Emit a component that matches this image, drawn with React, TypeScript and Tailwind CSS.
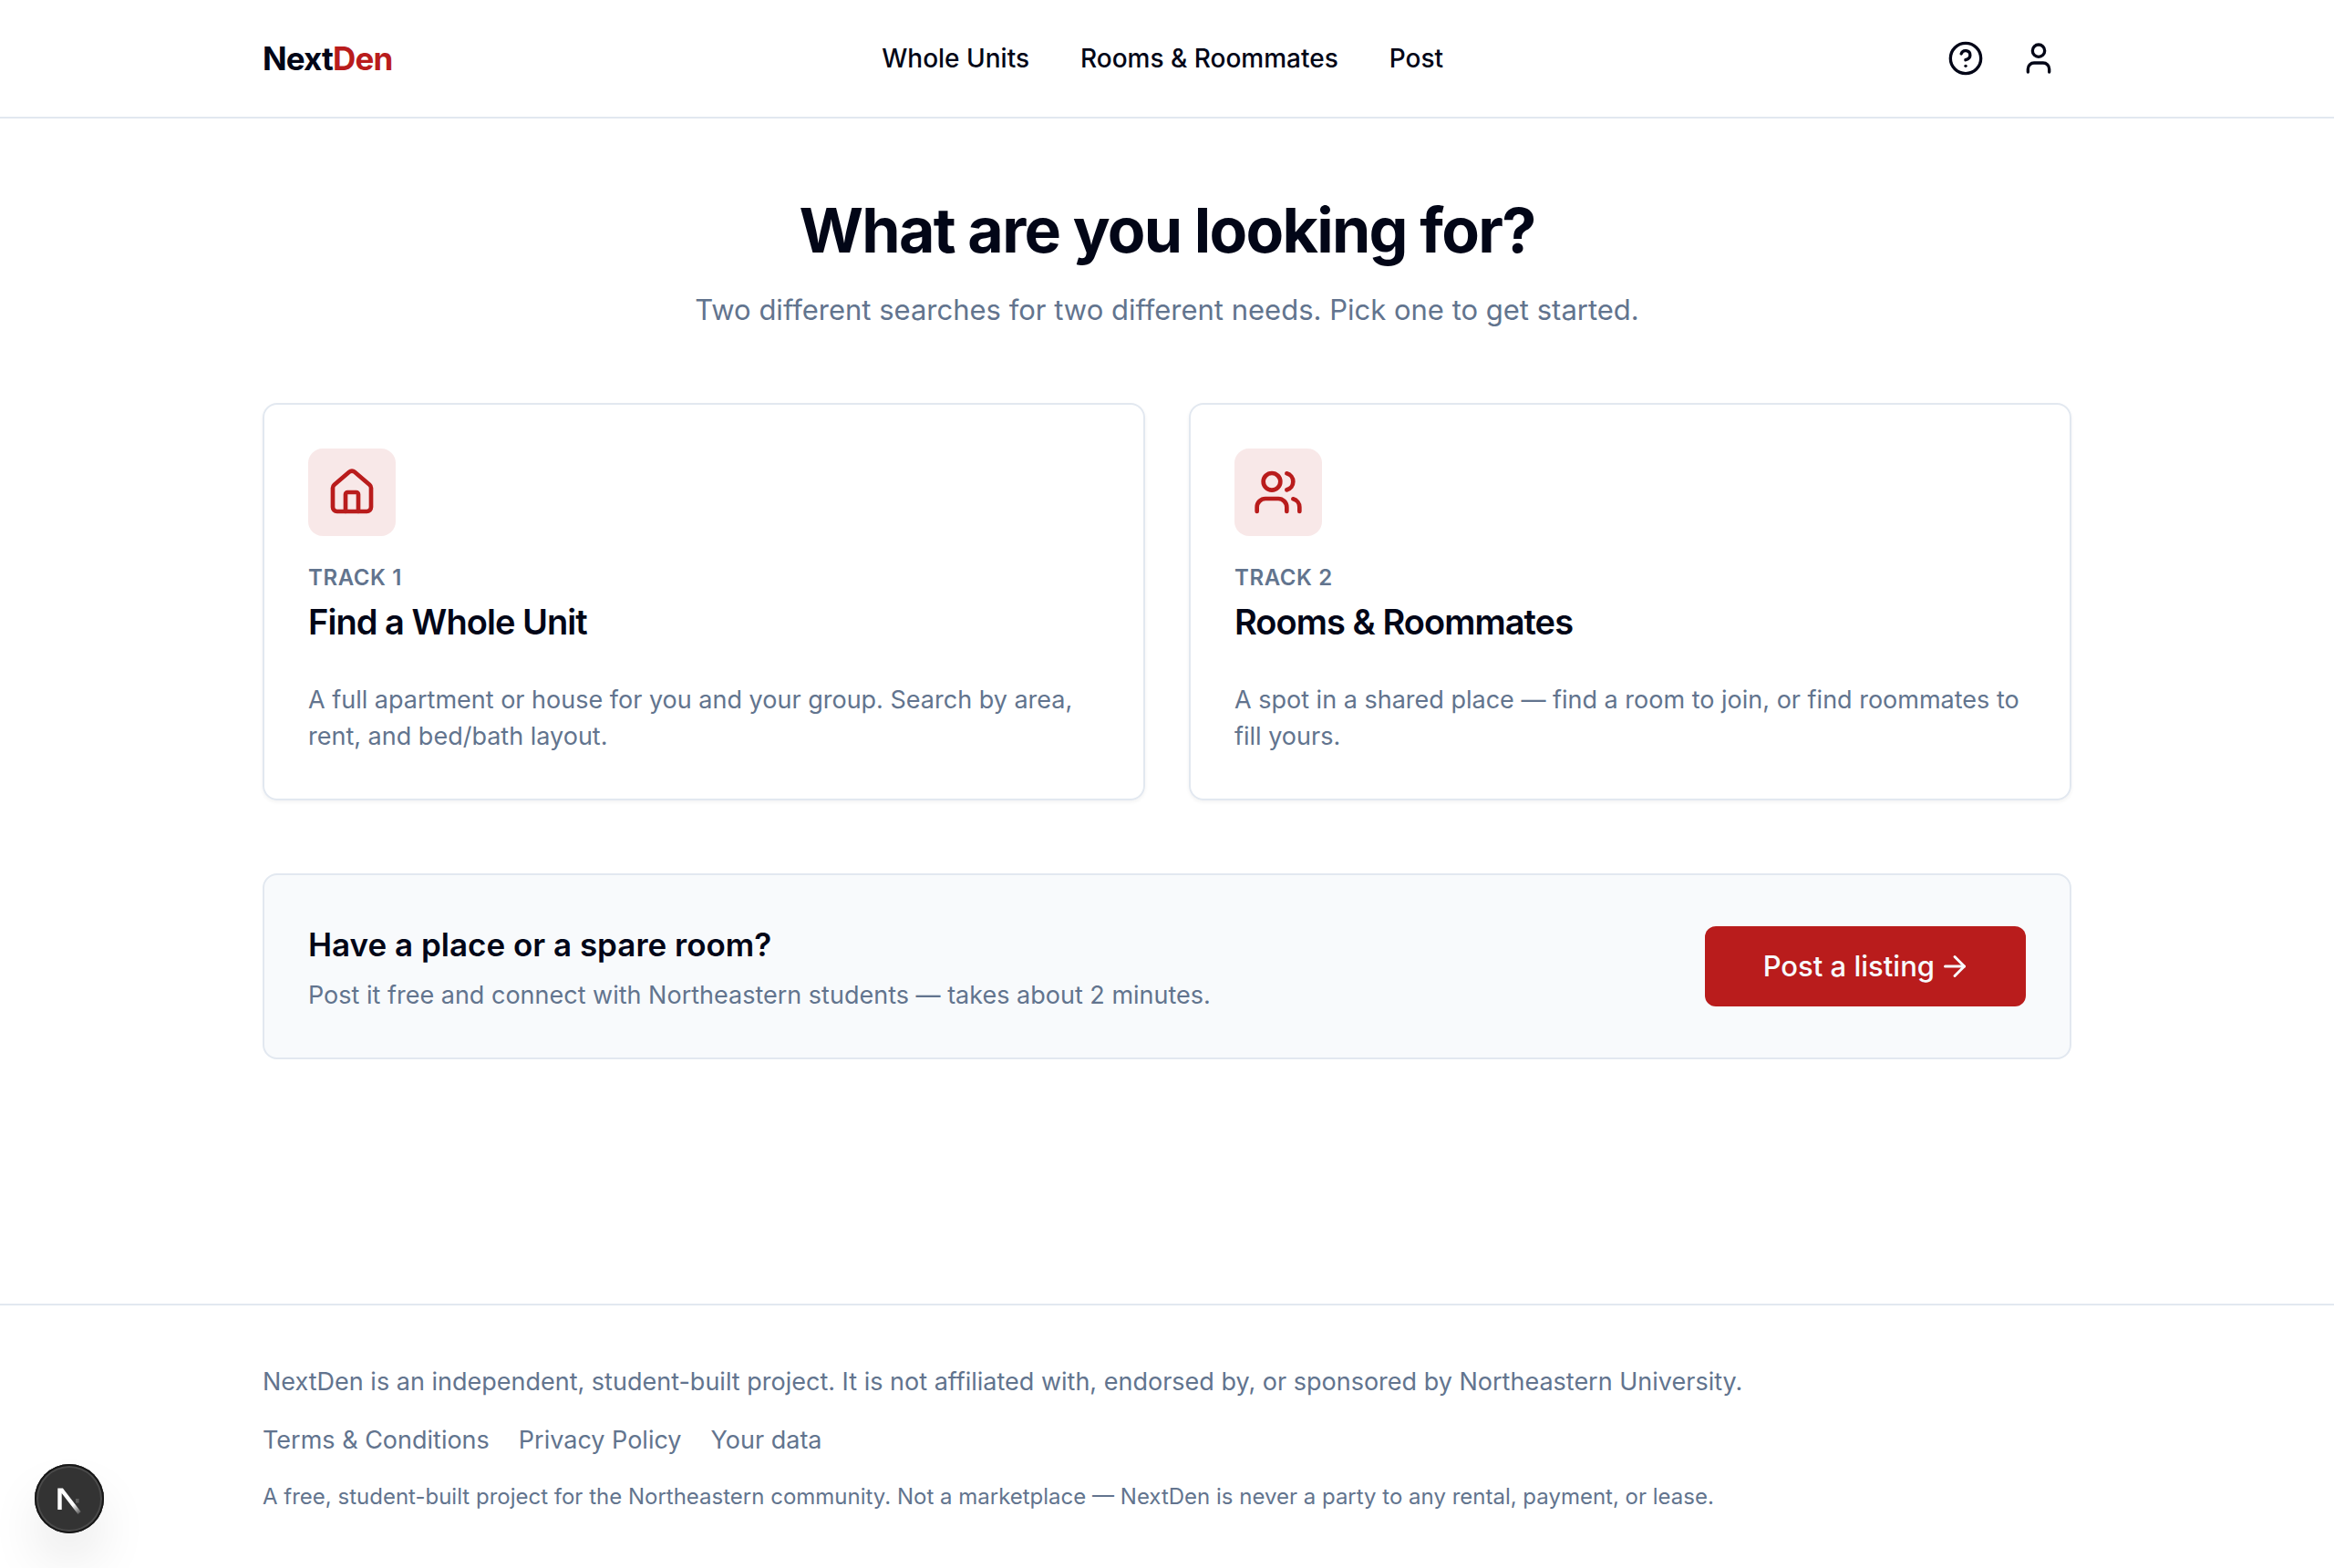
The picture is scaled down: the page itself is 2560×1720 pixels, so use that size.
import { ArrowRight, CircleHelp, House, User, Users } from "lucide-react";
import type { LucideIcon } from "lucide-react";

const navLinks = ["Whole Units", "Rooms & Roommates", "Post"];
const legalLinks = ["Terms & Conditions", "Privacy Policy", "Your data"];

function Header() {
  return (
    <header className="border-b-2 border-slate-200">
      <div className="mx-auto flex h-32 max-w-[2048px] items-center justify-between px-8">
        <a href="#" className="text-[35px] leading-10 font-bold tracking-tight">
          Next<span className="text-[#b91c1c]">Den</span>
        </a>
        <nav className="flex gap-14 text-[28px] leading-10 font-medium">
          {navLinks.map((label) => (
            <a key={label} href="#">
              {label}
            </a>
          ))}
        </nav>
        <div className="flex gap-2">
          <button type="button" aria-label="Help" className="flex size-18 items-center justify-center">
            <CircleHelp className="size-10" />
          </button>
          <button type="button" aria-label="Account" className="flex size-18 items-center justify-center">
            <User className="size-10" />
          </button>
        </div>
      </div>
    </header>
  );
}

type TrackProps = { icon: LucideIcon; track: string; title: string; text: string };

function TrackCard({ icon: Icon, track, title, text }: TrackProps) {
  return (
    <a href="#" className="block rounded-2xl border-2 border-slate-200 p-12 shadow-[0_2px_4px_rgba(0,0,0,0.05)]">
      <span className="flex size-24 items-center justify-center rounded-2xl bg-[#b91c1c]/10 text-[#b91c1c]">
        <Icon className="size-14" />
      </span>
      <p className="mt-7 text-2xl leading-9 font-semibold tracking-wide text-slate-500 uppercase">{track}</p>
      <h2 className="mt-2 text-[38px] leading-11 font-semibold tracking-tight">{title}</h2>
      <p className="mt-11 text-[27px] leading-10 text-slate-500">{text}</p>
    </a>
  );
}

function DevBadge() {
  return (
    <button
      type="button"
      aria-label="Open developer tools"
      className="fixed bottom-[38px] left-[38px] size-[76px] rounded-full bg-[#333333] shadow-[inset_0_0_0_2px_#171717,inset_0_0_0_4px_#4a4a4a,0_32px_64px_-16px_rgba(0,0,0,0.24)]"
    >
      <svg viewBox="0 0 76 76" className="size-full" fill="none" aria-hidden="true">
        <defs>
          <linearGradient id="stem" x1="42" y1="45" x2="51" y2="56" gradientUnits="userSpaceOnUse">
            <stop stopColor="#fff" />
            <stop offset="1" stopColor="#fff" stopOpacity="0" />
          </linearGradient>
        </defs>
        <path d="M25.3 26.5h5.6l19.8 25.8-3.2 2.6L29.7 32V50h-4.4z" fill="url(#stem)" />
        <path d="M45 38h3.6v4.6H45z" fill="#fff" fillOpacity="0.2" />
      </svg>
    </button>
  );
}

export default function App() {
  return (
    <div className="flex min-h-screen flex-col bg-white font-['Inter',sans-serif] text-[#020617]">
      <Header />
      <main className="mx-auto w-full max-w-[2048px] flex-1 px-8 pt-20">
        <div className="text-center">
          <h1 className="text-[68px] leading-21 font-bold tracking-tight">What are you looking for?</h1>
          <p className="mt-5 text-[31px] leading-13 text-slate-500">
            Two different searches for two different needs. Pick one to get started.
          </p>
        </div>
        <div className="mt-19 grid grid-cols-2 gap-12">
          <TrackCard
            icon={House}
            track="Track 1"
            title="Find a Whole Unit"
            text="A full apartment or house for you and your group. Search by area, rent, and bed/bath layout."
          />
          <TrackCard
            icon={Users}
            track="Track 2"
            title="Rooms & Roommates"
            text="A spot in a shared place — find a room to join, or find roommates to fill yours."
          />
        </div>
        <section className="mt-20 flex items-center justify-between rounded-2xl border-2 border-slate-200 bg-slate-50 p-12">
          <div>
            <h2 className="text-[35px] leading-14 font-semibold">Have a place or a spare room?</h2>
            <p className="mt-2 text-[27px] leading-10 text-slate-500">
              Post it free and connect with Northeastern students — takes about 2 minutes.
            </p>
          </div>
          <a
            href="#"
            className="flex h-22 items-center gap-1 rounded-xl bg-[#b91c1c] pr-15 pl-16 text-[31px] font-medium text-slate-50"
          >
            Post a listing
            <ArrowRight className="size-9" />
          </a>
        </section>
      </main>
      <footer className="border-t-2 border-slate-200 text-slate-500">
        <div className="mx-auto max-w-[2048px] px-8 pt-16 pb-15">
          <p className="text-[27px] leading-10">
            NextDen is an independent, student-built project. It is not affiliated with, endorsed by, or sponsored by
            Northeastern University.
          </p>
          <nav className="mt-6 flex gap-8 text-[27px] leading-10">
            {legalLinks.map((label) => (
              <a key={label} href="#">
                {label}
              </a>
            ))}
          </nav>
          <p className="mt-6 text-2xl leading-9">
            A free, student-built project for the Northeastern community. Not a marketplace — NextDen is never a party
            to any rental, payment, or lease.
          </p>
        </div>
      </footer>
      <DevBadge />
    </div>
  );
}
